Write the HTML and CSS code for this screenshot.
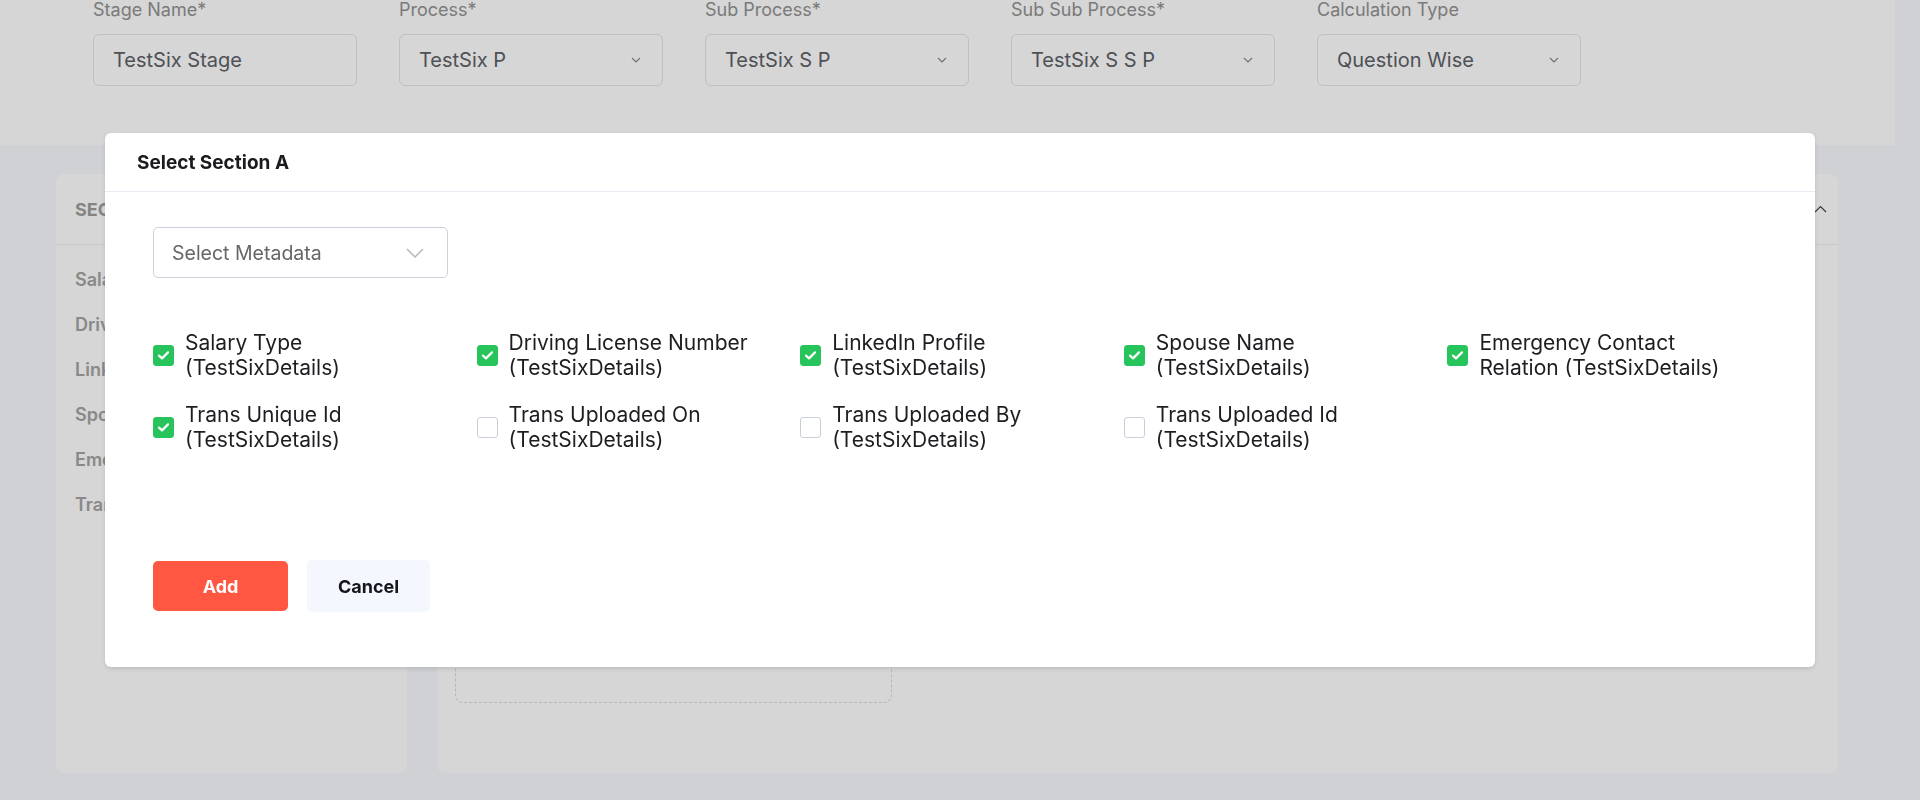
FILE: index.html
```html
<!DOCTYPE html>
<html lang="en">
<head>
<meta charset="utf-8">
<title>Select Section A</title>
<link rel="stylesheet" href="styles.css">
</head>
<body>
<div class="page">
  <div class="top-card">
    <div class="field">
      <label class="field-label">Stage Name*</label>
      <div class="input">TestSix Stage</div>
    </div>
    <div class="field">
      <label class="field-label">Process*</label>
      <div class="input">TestSix P
        <svg class="chev-sm" width="10" height="6" viewBox="0 0 10 6"><polyline points="1,1 5,5 9,1" fill="none" stroke="#8a8a8a" stroke-width="1.2"/></svg>
      </div>
    </div>
    <div class="field">
      <label class="field-label">Sub Process*</label>
      <div class="input">TestSix S P
        <svg class="chev-sm" width="10" height="6" viewBox="0 0 10 6"><polyline points="1,1 5,5 9,1" fill="none" stroke="#8a8a8a" stroke-width="1.2"/></svg>
      </div>
    </div>
    <div class="field">
      <label class="field-label">Sub Sub Process*</label>
      <div class="input">TestSix S S P
        <svg class="chev-sm" width="10" height="6" viewBox="0 0 10 6"><polyline points="1,1 5,5 9,1" fill="none" stroke="#8a8a8a" stroke-width="1.2"/></svg>
      </div>
    </div>
    <div class="field">
      <label class="field-label">Calculation Type</label>
      <div class="input">Question Wise
        <svg class="chev-sm" width="10" height="6" viewBox="0 0 10 6"><polyline points="1,1 5,5 9,1" fill="none" stroke="#8a8a8a" stroke-width="1.2"/></svg>
      </div>
    </div>
  </div>

  <div class="content">
    <div class="left-card">
      <div class="left-head">SECTIONS</div>
      <ul class="left-list">
        <li>Salary Type</li>
        <li>Driving License Number</li>
        <li>LinkedIn Profile</li>
        <li>Spouse Name</li>
        <li>Emergency Contact Relation</li>
        <li>Trans Unique Id</li>
      </ul>
    </div>
    <div class="right-card">
      <div class="right-head">
        <span class="right-title">Section A</span>
        <svg width="13" height="8" viewBox="0 0 13 8"><polyline points="1,7 6.5,1.5 12,7" fill="none" stroke="#444" stroke-width="1.2"/></svg>
      </div>
      <div class="right-body">
        <div class="dropzone"></div>
      </div>
    </div>
  </div>
</div>

<div class="overlay"></div>

<div class="modal">
  <div class="modal-head">Select Section A</div>
  <div class="modal-body">
    <div class="select">
      <span>Select Metadata</span>
      <svg width="18" height="10" viewBox="0 0 18 10"><polyline points="1,1 9,9 17,1" fill="none" stroke="#b9b9b9" stroke-width="1.5"/></svg>
    </div>

    <div class="checks">
      <label class="check"><span class="box on"><svg width="21" height="21" viewBox="0 0 21 21"><polyline points="6,10.6 9,13.4 15,7.4" fill="none" stroke="#fff" stroke-width="2.2" stroke-linecap="round" stroke-linejoin="round"/></svg></span><span class="check-text">Salary Type (TestSixDetails)</span></label>
      <label class="check"><span class="box on"><svg width="21" height="21" viewBox="0 0 21 21"><polyline points="6,10.6 9,13.4 15,7.4" fill="none" stroke="#fff" stroke-width="2.2" stroke-linecap="round" stroke-linejoin="round"/></svg></span><span class="check-text">Driving License Number (TestSixDetails)</span></label>
      <label class="check"><span class="box on"><svg width="21" height="21" viewBox="0 0 21 21"><polyline points="6,10.6 9,13.4 15,7.4" fill="none" stroke="#fff" stroke-width="2.2" stroke-linecap="round" stroke-linejoin="round"/></svg></span><span class="check-text">LinkedIn Profile (TestSixDetails)</span></label>
      <label class="check"><span class="box on"><svg width="21" height="21" viewBox="0 0 21 21"><polyline points="6,10.6 9,13.4 15,7.4" fill="none" stroke="#fff" stroke-width="2.2" stroke-linecap="round" stroke-linejoin="round"/></svg></span><span class="check-text">Spouse Name (TestSixDetails)</span></label>
      <label class="check"><span class="box on"><svg width="21" height="21" viewBox="0 0 21 21"><polyline points="6,10.6 9,13.4 15,7.4" fill="none" stroke="#fff" stroke-width="2.2" stroke-linecap="round" stroke-linejoin="round"/></svg></span><span class="check-text">Emergency Contact Relation (TestSixDetails)</span></label>
      <label class="check"><span class="box on"><svg width="21" height="21" viewBox="0 0 21 21"><polyline points="6,10.6 9,13.4 15,7.4" fill="none" stroke="#fff" stroke-width="2.2" stroke-linecap="round" stroke-linejoin="round"/></svg></span><span class="check-text">Trans Unique Id (TestSixDetails)</span></label>
      <label class="check"><span class="box"></span><span class="check-text">Trans Uploaded On (TestSixDetails)</span></label>
      <label class="check"><span class="box"></span><span class="check-text">Trans Uploaded By (TestSixDetails)</span></label>
      <label class="check"><span class="box"></span><span class="check-text">Trans Uploaded Id (TestSixDetails)</span></label>
    </div>

    <div class="actions">
      <button class="btn btn-add">Add</button>
      <button class="btn btn-cancel">Cancel</button>
    </div>
  </div>
</div>
</body>
</html>
```

FILE: styles.css
```css
* { box-sizing: border-box; }

html, body {
  margin: 0;
  padding: 0;
}

body {
  width: 1920px;
  height: 800px;
  overflow: hidden;
  background: #f8f9fe;
  font-family: Inter, "Noto Sans", sans-serif;
}

.page {
  width: 1920px;
}

.top-card {
  width: 1895px;
  height: 145px;
  background: #ffffff;
  padding-left: 93px;
  display: grid;
  grid-template-columns: repeat(5, 264px);
  column-gap: 42px;
  align-content: start;
}

.field-label {
  display: block;
  font-size: 18px;
  line-height: 20px;
  color: #929292;
  margin-bottom: 14px;
}

.input {
  height: 52px;
  border: 1px solid #e2e5ec;
  border-radius: 6px;
  padding: 0 21px 0 19px;
  display: flex;
  align-items: center;
  justify-content: space-between;
  font-size: 20px;
  color: #5d6167;
}

.content {
  display: flex;
  gap: 30px;
  padding: 29px 0 0 56px;
}

.left-card {
  width: 351px;
  height: 599px;
  background: #ffffff;
  border-radius: 8px;
}

.left-head {
  height: 71px;
  border-bottom: 1px solid #eceef3;
  padding-left: 19px;
  display: flex;
  align-items: center;
  font-size: 18px;
  font-weight: 700;
  color: #9e9e9e;
}

.left-list {
  list-style: none;
  margin: 0;
  padding: 12px 0 0 19px;
}

.left-list li {
  height: 45px;
  line-height: 45px;
  font-size: 18px;
  font-weight: 600;
  color: #a4a4a4;
  white-space: nowrap;
}

.right-card {
  width: 1401px;
  height: 599px;
  background: #ffffff;
  border-radius: 8px;
}

.right-head {
  height: 71px;
  border-bottom: 1px solid #eceef3;
  padding: 0 11px 0 19px;
  display: flex;
  align-items: center;
  justify-content: space-between;
}

.right-title {
  font-size: 18px;
  font-weight: 700;
  color: #9e9e9e;
}

.right-body {
  padding: 300px 0 0 18px;
}

.dropzone {
  width: 437px;
  height: 158px;
  border: 1.5px dashed #d7dae6;
  border-radius: 8px;
}

.overlay {
  position: fixed;
  inset: 0;
  background: rgba(0, 0, 0, 0.16);
}

.modal {
  position: fixed;
  left: 105px;
  top: 133px;
  width: 1710px;
  height: 534px;
  background: #ffffff;
  border-radius: 6px;
  box-shadow: 0 2px 5px rgba(0, 0, 0, 0.12);
}

.modal-head {
  height: 59px;
  border-bottom: 1px solid #e9ebf2;
  padding-left: 32px;
  display: flex;
  align-items: center;
  font-size: 19px;
  font-weight: 700;
  color: #1b1b1f;
}

.modal-body {
  padding: 35px 44px 0 48px;
}

.select {
  width: 295px;
  height: 51px;
  border: 1px solid #cdd1dc;
  border-radius: 5px;
  padding: 0 23px 0 18px;
  display: flex;
  align-items: center;
  justify-content: space-between;
  font-size: 19.5px;
  color: #666666;
}

.checks {
  margin-top: 53px;
  display: grid;
  grid-template-columns: repeat(5, 1fr);
  row-gap: 23px;
}

.check {
  display: flex;
  align-items: center;
  gap: 11px;
}

.box {
  flex: none;
  width: 21px;
  height: 21px;
  border-radius: 3px;
  border: 1px solid #c9cedb;
  background: #ffffff;
  display: flex;
}

.box.on {
  border-color: #27c35b;
  background: #27c35b;
}

.box svg {
  margin: -1px;
}

.check-text {
  max-width: 252px;
  font-size: 21px;
  line-height: 24.5px;
  color: #1e1e22;
}

.actions {
  margin-top: 108px;
  display: flex;
  align-items: center;
  gap: 19px;
}

.btn {
  border: none;
  font-family: Inter, "Noto Sans", sans-serif;
  font-size: 18px;
  font-weight: 700;
  border-radius: 5px;
  cursor: pointer;
}

.btn-add {
  width: 135px;
  height: 50px;
  background: #ff5741;
  color: #ffffff;
}

.btn-cancel {
  width: 123px;
  height: 52px;
  background: #f4f7fd;
  color: #15151a;
}
```
